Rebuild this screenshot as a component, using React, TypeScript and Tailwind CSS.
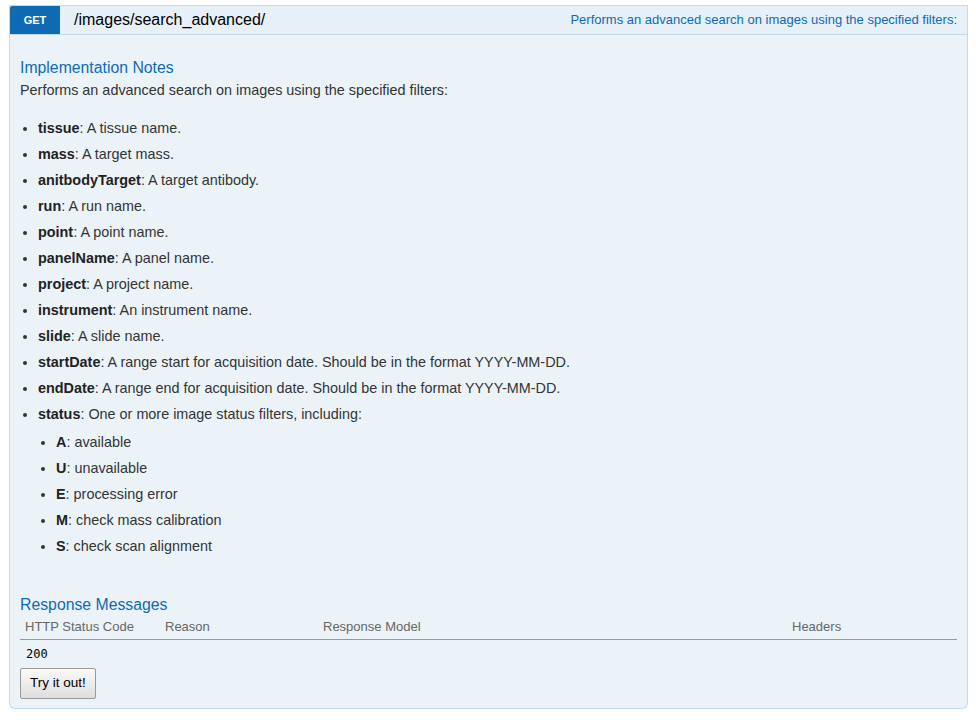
import React from "react";

const params: [string, string][] = [
  ["tissue", "A tissue name."],
  ["mass", "A target mass."],
  ["anitbodyTarget", "A target antibody."],
  ["run", "A run name."],
  ["point", "A point name."],
  ["panelName", "A panel name."],
  ["project", "A project name."],
  ["instrument", "An instrument name."],
  ["slide", "A slide name."],
  ["startDate", "A range start for acquisition date. Should be in the format YYYY-MM-DD."],
  ["endDate", "A range end for acquisition date. Should be in the format YYYY-MM-DD."],
];

const statuses: [string, string][] = [
  ["A", "available"],
  ["U", "unavailable"],
  ["E", "processing error"],
  ["M", "check mass calibration"],
  ["S", "check scan alignment"],
];

export default function App() {
  return (
    <div
      className="min-h-[722px] bg-white pt-[5px] pl-[9px] text-[#333]"
      style={{ fontFamily: '"Liberation Sans", Arial, sans-serif' }}
    >
      <div className="w-[959px]">
        {/* heading */}
        <div className="flex h-[30px] items-stretch border border-[#c3d9ec] bg-[#e7f0f7]">
          <div className="flex w-[50px] items-center justify-center rounded-tl-[2px] bg-[#0f6ab4] text-[11px] font-bold text-white">
            GET
          </div>
          <div className="ml-[14px] flex items-center text-[16px] text-black">/images/search_advanced/</div>
          <div className="ml-auto mr-[10px] flex items-center text-[13px] text-[#0f6ab4]">
            Performs an advanced search on images using the specified filters:
          </div>
        </div>
        {/* content */}
        <div className="rounded-b-[6px] border border-t-0 border-[#c3d9ec] bg-[#ebf3f9] px-[10px] pt-[23px] pb-[9px]">
          <h4 className="text-[15.8px] leading-[20px] text-[#0f6ab4]">Implementation Notes</h4>
          <p className="mt-[2px] text-[14.4px] leading-[20px]">
            Performs an advanced search on images using the specified filters:
          </p>
          <ul className="mt-[15px] list-disc pl-[18px] text-[14.4px] leading-[26px]">
            {params.map(([k, v]) => (
              <li key={k}>
                <strong className="font-bold text-[#222]">{k}</strong>: {v}
              </li>
            ))}
            <li>
              <strong className="font-bold text-[#222]">status</strong>: One or more image status filters, including:
              <ul className="mt-[2px] list-disc pl-[18px]">
                {statuses.map(([k, v]) => (
                  <li key={k}>
                    <strong className="font-bold text-[#222]">{k}</strong>: {v}
                  </li>
                ))}
              </ul>
            </li>
          </ul>
          <h4 className="mt-[36px] text-[15.8px] leading-[20px] text-[#0f6ab4]">Response Messages</h4>
          <div className="mt-[3px] flex border-b border-[#999] pb-[3px] text-[13px] leading-[18px] text-[#666]">
            <div className="w-[145px] pl-[5px]">HTTP Status Code</div>
            <div className="w-[158px]">Reason</div>
            <div className="w-[469px]">Response Model</div>
            <div>Headers</div>
          </div>
          <div
            className="mt-[6px] pl-[6px] text-[12px] leading-[16px] text-black"
            style={{ fontFamily: '"DejaVu Sans Mono", monospace' }}
          >
            200
          </div>
          <button className="mt-[6px] h-[31px] rounded-[2px] border border-[#999] bg-gradient-to-b from-[#fafafa] to-[#dedede] px-[9px] text-[13.5px] text-black">
            Try it out!
          </button>
        </div>
      </div>
    </div>
  );
}
